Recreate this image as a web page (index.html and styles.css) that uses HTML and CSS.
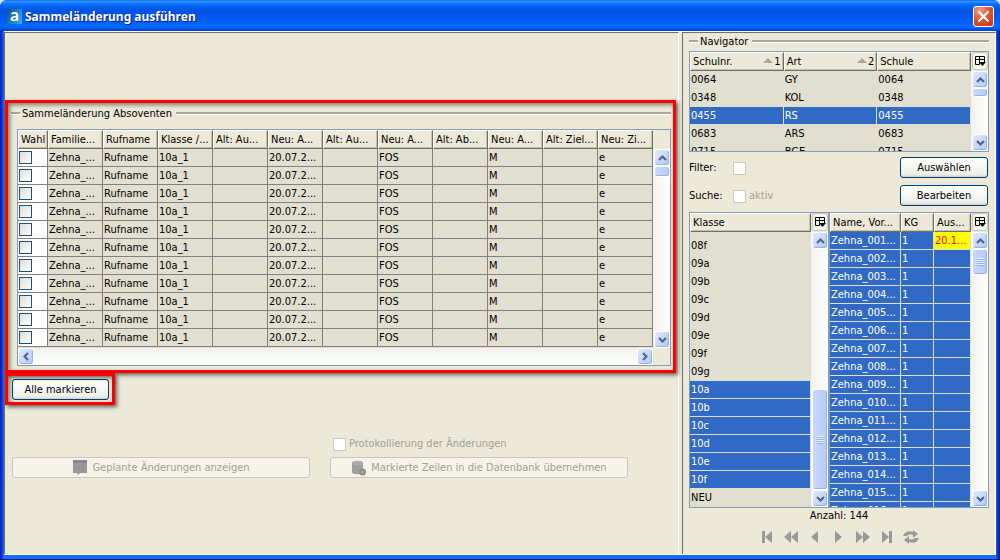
FILE: index.html
```html
<!DOCTYPE html>
<html lang="de">
<head>
<meta charset="utf-8">
<title>Sammeländerung ausführen</title>
<link rel="stylesheet" href="styles.css">
</head>
<body>
<svg class="defs" aria-hidden="true">
  <symbol id="up" viewBox="0 0 9 6"><path d="M1 5 4.500 1.500 8 5" fill="none" stroke="#4d6185" stroke-width="2"/></symbol>
  <symbol id="down" viewBox="0 0 9 6"><path d="M1 1 4.500 4.500 8 1" fill="none" stroke="#4d6185" stroke-width="2"/></symbol>
  <symbol id="left" viewBox="0 0 6 9"><path d="M5 1 1.500 4.500 5 8" fill="none" stroke="#4d6185" stroke-width="2"/></symbol>
  <symbol id="right" viewBox="0 0 6 9"><path d="M1 1 4.500 4.500 1 8" fill="none" stroke="#4d6185" stroke-width="2"/></symbol>
  <symbol id="cols" viewBox="0 0 11 11"><path d="M0.500 0.500h9v3h-9zM0.500 3v5.500h4M4.500 0v8.500M9.500 3v3" fill="none" stroke="#000"/><path d="M4 6h7L7.500 10z"/></symbol>
</svg>
<div class="window">
  <header class="titlebar">
    <span class="logo">a</span>
    <h1>Sammeländerung ausführen</h1>
    <button class="close" aria-label="Schließen"><svg width="13" height="13" viewBox="0 0 13 13"><path d="M1.500 1.500l10 10M11.500 1.500l-10 10" stroke="#fff" stroke-width="2.200"/></svg></button>
  </header>
  <div class="content">
    <main class="main">
      <section class="group marked">
        <h2 class="legend">Sammeländerung Absoventen</h2>
        <div class="frame graduates">
          <div class="view">
            <table class="grid">
              <colgroup><col class="c-check"><col><col><col><col><col><col><col><col><col><col><col></colgroup>
              <thead><tr><th>Wahl</th><th>Familie...</th><th>Rufname</th><th>Klasse /...</th><th>Alt: Au...</th><th>Neu: A...</th><th>Alt: Au...</th><th>Neu: A...</th><th>Alt: Ab...</th><th>Neu: A...</th><th>Alt: Ziel...</th><th>Neu: Zi...</th></tr></thead>
              <tbody>
                <tr><td><input type="checkbox" aria-label="Zeile 1 wählen"></td><td>Zehna_...</td><td>Rufname</td><td>10a_1</td><td></td><td>20.07.2...</td><td></td><td>FOS</td><td></td><td>M</td><td></td><td>e</td></tr>
                <tr><td><input type="checkbox" aria-label="Zeile 2 wählen"></td><td>Zehna_...</td><td>Rufname</td><td>10a_1</td><td></td><td>20.07.2...</td><td></td><td>FOS</td><td></td><td>M</td><td></td><td>e</td></tr>
                <tr><td><input type="checkbox" aria-label="Zeile 3 wählen"></td><td>Zehna_...</td><td>Rufname</td><td>10a_1</td><td></td><td>20.07.2...</td><td></td><td>FOS</td><td></td><td>M</td><td></td><td>e</td></tr>
                <tr><td><input type="checkbox" aria-label="Zeile 4 wählen"></td><td>Zehna_...</td><td>Rufname</td><td>10a_1</td><td></td><td>20.07.2...</td><td></td><td>FOS</td><td></td><td>M</td><td></td><td>e</td></tr>
                <tr><td><input type="checkbox" aria-label="Zeile 5 wählen"></td><td>Zehna_...</td><td>Rufname</td><td>10a_1</td><td></td><td>20.07.2...</td><td></td><td>FOS</td><td></td><td>M</td><td></td><td>e</td></tr>
                <tr><td><input type="checkbox" aria-label="Zeile 6 wählen"></td><td>Zehna_...</td><td>Rufname</td><td>10a_1</td><td></td><td>20.07.2...</td><td></td><td>FOS</td><td></td><td>M</td><td></td><td>e</td></tr>
                <tr><td><input type="checkbox" aria-label="Zeile 7 wählen"></td><td>Zehna_...</td><td>Rufname</td><td>10a_1</td><td></td><td>20.07.2...</td><td></td><td>FOS</td><td></td><td>M</td><td></td><td>e</td></tr>
                <tr><td><input type="checkbox" aria-label="Zeile 8 wählen"></td><td>Zehna_...</td><td>Rufname</td><td>10a_1</td><td></td><td>20.07.2...</td><td></td><td>FOS</td><td></td><td>M</td><td></td><td>e</td></tr>
                <tr><td><input type="checkbox" aria-label="Zeile 9 wählen"></td><td>Zehna_...</td><td>Rufname</td><td>10a_1</td><td></td><td>20.07.2...</td><td></td><td>FOS</td><td></td><td>M</td><td></td><td>e</td></tr>
                <tr><td><input type="checkbox" aria-label="Zeile 10 wählen"></td><td>Zehna_...</td><td>Rufname</td><td>10a_1</td><td></td><td>20.07.2...</td><td></td><td>FOS</td><td></td><td>M</td><td></td><td>e</td></tr>
                <tr><td><input type="checkbox" aria-label="Zeile 11 wählen"></td><td>Zehna_...</td><td>Rufname</td><td>10a_1</td><td></td><td>20.07.2...</td><td></td><td>FOS</td><td></td><td>M</td><td></td><td>e</td></tr>
              </tbody>
            </table>
          </div>
          <div class="vbar"><button aria-label="Nach oben"><svg width="9" height="6"><use href="#up"/></svg></button><span class="thumb t-grad"></span><button class="end" aria-label="Nach unten"><svg width="9" height="6"><use href="#down"/></svg></button></div>
          <div class="hbar"><button aria-label="Nach links"><svg width="6" height="9"><use href="#left"/></svg></button><button aria-label="Nach rechts"><svg width="6" height="9"><use href="#right"/></svg></button></div>
        </div>
      </section>
      <div class="mark-all marked"><button class="btn">Alle markieren</button></div>
      <div class="actions">
        <label class="log disabled"><input type="checkbox" disabled>Protokollierung der Änderungen</label>
        <button class="btn show" disabled><svg width="16" height="15" viewBox="0 0 16 15"><path d="M1 0h14v13H8l-2 2-1-2H1z" fill="#99999a"/><path d="M1 1.500h14" stroke="#828284" stroke-width="2"/><path d="M4 10l3-4v4M10 5h2l-2 3 2 2" fill="none" stroke="#8c8c8c"/></svg>Geplante Änderungen anzeigen</button>
        <button class="btn apply" disabled><svg width="16" height="16" viewBox="0 0 16 16"><path d="M1 3c0-3 11-3 11 0v9c0 3-11 3-11 0z" fill="#a0a0a0"/><ellipse cx="6.500" cy="3" rx="5" ry="2" fill="#adadad"/><circle cx="11.500" cy="12" r="3.500" fill="#8c8c8c"/><path d="M9.500 12h4M11.500 10v4" stroke="#aaa"/></svg>Markierte Zeilen in die Datenbank übernehmen</button>
      </div>
    </main>
    <aside class="side">
      <h2 class="legend">Navigator</h2>
      <div class="frame schools">
        <div class="view">
          <table class="grid plain">
            <thead><tr><th>Schulnr.<span class="sort">1</span></th><th>Art<span class="sort">2</span></th><th>Schule</th></tr></thead>
            <tbody>
              <tr><td>0064</td><td>GY</td><td>0064</td></tr>
              <tr><td>0348</td><td>KOL</td><td>0348</td></tr>
              <tr class="sel"><td>0455</td><td>RS</td><td>0455</td></tr>
              <tr><td>0683</td><td>ARS</td><td>0683</td></tr>
              <tr><td>0715</td><td>BGE</td><td>0715</td></tr>
            </tbody>
          </table>
        </div>
        <button class="colbtn" aria-label="Spalten"><svg width="11" height="11"><use href="#cols"/></svg></button>
        <div class="vbar"><button aria-label="Nach oben"><svg width="9" height="6"><use href="#up"/></svg></button><span class="thumb t-school"></span><button class="end" aria-label="Nach unten"><svg width="9" height="6"><use href="#down"/></svg></button></div>
      </div>
      <div class="tools">
        <label for="filter">Filter:</label><span><input type="checkbox" id="filter" disabled></span><button class="btn">Auswählen</button>
        <span>Suche:</span><label class="disabled"><input type="checkbox" disabled>aktiv</label><button class="btn">Bearbeiten</button>
      </div>
      <div class="lists">
        <div class="frame classes">
          <div class="view">
            <table class="grid plain">
              <thead><tr><th>Klasse</th></tr></thead>
              <tbody>
                <tr class="cut"><td></td></tr>
                <tr><td>08f</td></tr><tr><td>09a</td></tr><tr><td>09b</td></tr><tr><td>09c</td></tr><tr><td>09d</td></tr><tr><td>09e</td></tr><tr><td>09f</td></tr><tr><td>09g</td></tr>
                <tr class="sel"><td>10a</td></tr><tr class="sel"><td>10b</td></tr><tr class="sel"><td>10c</td></tr><tr class="sel"><td>10d</td></tr><tr class="sel"><td>10e</td></tr><tr class="sel"><td>10f</td></tr>
                <tr><td>NEU</td></tr>
              </tbody>
            </table>
          </div>
          <button class="colbtn" aria-label="Spalten"><svg width="11" height="11"><use href="#cols"/></svg></button>
          <div class="vbar"><button aria-label="Nach oben"><svg width="9" height="6"><use href="#up"/></svg></button><span class="thumb t-class grip"></span><button aria-label="Nach unten"><svg width="9" height="6"><use href="#down"/></svg></button></div>
        </div>
        <div class="frame pupils">
          <div class="view">
            <table class="grid plain">
              <colgroup><col><col class="c-kg"><col class="c-out"></colgroup>
              <thead><tr><th>Name, Vor...</th><th>KG</th><th>Aus...</th></tr></thead>
              <tbody>
                <tr class="sel"><td>Zehna_001...</td><td>1</td><td class="alert">20.1...</td></tr>
                <tr class="sel"><td>Zehna_002...</td><td>1</td><td></td></tr>
                <tr class="sel"><td>Zehna_003...</td><td>1</td><td></td></tr>
                <tr class="sel"><td>Zehna_004...</td><td>1</td><td></td></tr>
                <tr class="sel"><td>Zehna_005...</td><td>1</td><td></td></tr>
                <tr class="sel"><td>Zehna_006...</td><td>1</td><td></td></tr>
                <tr class="sel"><td>Zehna_007...</td><td>1</td><td></td></tr>
                <tr class="sel"><td>Zehna_008...</td><td>1</td><td></td></tr>
                <tr class="sel"><td>Zehna_009...</td><td>1</td><td></td></tr>
                <tr class="sel"><td>Zehna_010...</td><td>1</td><td></td></tr>
                <tr class="sel"><td>Zehna_011...</td><td>1</td><td></td></tr>
                <tr class="sel"><td>Zehna_012...</td><td>1</td><td></td></tr>
                <tr class="sel"><td>Zehna_013...</td><td>1</td><td></td></tr>
                <tr class="sel"><td>Zehna_014...</td><td>1</td><td></td></tr>
                <tr class="sel"><td>Zehna_015...</td><td>1</td><td></td></tr>
                <tr class="sel"><td>Zehna_016...</td><td>1</td><td></td></tr>
              </tbody>
            </table>
          </div>
          <button class="colbtn" aria-label="Spalten"><svg width="11" height="11"><use href="#cols"/></svg></button>
          <div class="vbar"><button aria-label="Nach oben"><svg width="9" height="6"><use href="#up"/></svg></button><span class="thumb t-pupil grip"></span><button class="end" aria-label="Nach unten"><svg width="9" height="6"><use href="#down"/></svg></button></div>
        </div>
      </div>
      <p class="count">Anzahl: 144</p>
      <nav class="pager">
        <button aria-label="Erster"><svg viewBox="0 0 16 14"><path d="M3 1h3v12H3zM13 1v12L6 7z"/></svg></button>
        <button aria-label="Schnell zurück"><svg viewBox="0 0 16 14"><path d="M8 1v12L1 7zM15 1v12L8 7z"/></svg></button>
        <button aria-label="Zurück"><svg viewBox="0 0 16 14"><path d="M11 1v12L4 7z"/></svg></button>
        <button aria-label="Weiter"><svg viewBox="0 0 16 14"><path d="M4 1v12l7-6z"/></svg></button>
        <button aria-label="Schnell vor"><svg viewBox="0 0 16 14"><path d="M1 1v12l7-6zM8 1v12l7-6z"/></svg></button>
        <button aria-label="Letzter"><svg viewBox="0 0 16 14"><path d="M3 1v12l7-6zM10 1h3v12h-3z"/></svg></button>
        <button aria-label="Aktualisieren"><svg viewBox="0 0 16 14"><path d="M0 6c1-4 6-6 10-4V0l5 4-5 4V5C7 4 5 5 4 6zM16 8c-1 4-6 6-10 4v2l-5-4 5-4v3c3 1 5 0 6-1z"/></svg></button>
      </nav>
    </aside>
  </div>
</div>
</body>
</html>
```
FILE: styles.css
```css
* { box-sizing: border-box; }
body { margin: 0; background: #d8e4f8; font: 11px/17px "DejaVu Sans Condensed", "DejaVu Sans", sans-serif; color: #000; }
button, input { font: inherit; margin: 0; padding: 0; }
h1, h2, p { margin: 0; }
.defs { display: none; }

.window { min-height: 100vh; display: flex; flex-direction: column; border-radius: 7px 7px 0 0; overflow: hidden;
  background: linear-gradient(90deg, #0010b8 0, #0a3cdc 2px, #166ef0 4px, #166ef0 calc(100% - 4px), #0042dc calc(100% - 3px), #001590 100%);
  padding: 0 4px 4px; border-bottom: 1px solid #00138c; }
.titlebar { display: flex; align-items: center; height: 31px; margin: 0 -4px; padding: 2px 6px 0 7px; gap: 3px;
  background: linear-gradient(#0058ee 0, #3593ff 1px, #288eff 2px, #127dff 3px, #0369fc 5px, #0262ee 7px, #0054e3 10px, #0055eb 15px, #005bf5 20px, #026afe 26px, #0061fc 28px, #0144d0 30px); }
.titlebar h1 { flex: 1; font: bold 12px/18px "Noto Sans", sans-serif; color: #fff; text-shadow: 1px 1px #0a1883; }
.logo { width: 15px; height: 15px; background: linear-gradient(120deg, #0b4f8c, #31b4e8); color: #fff; font: bold 17px/12px Lato, sans-serif; text-align: center; }
.close { width: 21px; height: 21px; border: 1px solid #fff; border-radius: 3px; display: grid; place-items: center; background: radial-gradient(circle at 30% 20%, #f0a080, #e05030 50%, #c83410); }

.content { flex: 1; display: flex; gap: 3px; background: #ece9d8; border-top: 1px solid #fff; border-bottom: 1px solid #fff; }
.main { flex: 1; min-width: 0; border: solid #716f64; border-width: 1px 0 0 1px; border-right: 1px solid #fff; padding: 67px 2px 0 0; }
.side { width: 314px; border: solid #716f64; border-width: 1px 0 0 1px; border-right: 1px solid #fff; padding: 0 6px; }

.legend { display: flex; align-items: center; gap: 2px; font-size: 11px; line-height: 17px; font-weight: normal; }
.legend::before, .legend::after { content: ""; height: 2px; background: #aca899; border-bottom: 1px solid #fff; }
.legend::before { width: 9px; }
.legend::after { flex: 1; margin-left: 2px; }

.marked { position: relative; }
.marked::after { content: ""; position: absolute; inset: 0; border: 3px solid #f00; box-shadow: 2px 2px 4px #0009, inset 2px 2px 4px #0007; pointer-events: none; }
.group { height: 273px; padding: 5px 5px 0 6px; }
.group .frame { margin: 7px 0 0 6px; }

.frame { display: grid; grid-template-columns: 1fr 17px; grid-template-rows: 19px 1fr; border: 1px solid #7f9db9; }
.view { grid-area: 1 / 1 / 3 / 2; overflow: hidden; min-width: 0; background: #e0dfd0; }
.graduates { grid-template-rows: 19px 199px 17px; }
.schools { height: 101px; }
.grid { width: 100%; table-layout: fixed; border-spacing: 0; white-space: nowrap; }
.grid th { height: 19px; padding: 0 0 0 2px; font-weight: normal; text-align: left; line-height: 15px; overflow: hidden;
  background: #ece9d8; border: 1px solid; border-color: #fff #716f64 #716f64 #fff; box-shadow: inset -1px -1px #c5c2b2; }
.grid td { height: 18px; padding: 0 0 0 1px; line-height: 17px; overflow: hidden; border: solid #808080; border-width: 0 1px 1px 0; }
.c-check { width: 30px; }
.graduates td:first-child { background: #fff; }
.plain td { border-color: #e0dfd0; }
.plain .sel td { background: #316ac5; color: #fff; }
.plain .sel .alert { background: #ff0; color: #f00; }
.plain .cut td { height: 5px; border: 0; line-height: 5px; }
.c-kg { width: 33px; }
.c-out { width: 37px; }
.sort { float: right; padding-right: 2px; }
.sort::before { content: ""; display: inline-block; border: solid transparent; border-width: 0 5px 5px; border-bottom-color: #aca899; margin: 0 1px 2px 0; }

input[type="checkbox"] { appearance: none; width: 13px; height: 13px; border: 1px solid #1c5180; background: linear-gradient(135deg, #dcdcd7, #fff); vertical-align: middle; }
input[type="checkbox"]:disabled { border-color: #cac8bb; background: #fff; }
td input[type="checkbox"] { display: block; }

.vbar { grid-column: 2; grid-row: 2; display: flex; flex-direction: column; padding-left: 1px; background: linear-gradient(90deg, #f3f1ec, #fefefb); }
.hbar { grid-column: 1; display: flex; justify-content: space-between; background: linear-gradient(#f3f1ec, #fefefb); }
.vbar button, .hbar button { width: 16px; height: 17px; flex: none; display: grid; place-items: center; border: 1px solid #fff; border-radius: 3px; background: linear-gradient(135deg, #e1eafe, #aec8f7); box-shadow: inset -1px -1px #98b4e4; }
.vbar .end { margin-top: auto; }
.thumb { width: 16px; border: 1px solid #fff; border-radius: 3px; background: linear-gradient(90deg, #c9d8fc, #b9cbf6); box-shadow: inset -1px -1px #98b4e4; display: grid; place-items: center; }
.grip::before { content: ""; width: 7px; height: 8px; background: repeating-linear-gradient(#eef4fe 0 1px, #8cb0f8 1px 2px); }
.t-grad { height: 11px; }
.t-school { height: 9px; }
.t-pupil { height: 26px; }
.t-class { height: 101px; margin-top: auto; }
.colbtn { width: 16px; height: 18px; margin-left: 1px; display: grid; place-items: center; background: #f5f4ea; border: 1px solid #c9c7ba; border-radius: 3px; }

.btn { height: 21px; border: 1px solid #003c74; border-radius: 3px; background: linear-gradient(#fff, #f0f0ea 85%, #d6d0c5); color: #000; display: flex; align-items: center; justify-content: center; gap: 4px; }
.btn:disabled { border-color: #c9c7ba; background: #f5f4ea; color: #a1a192; }
.disabled { color: #a1a192; }
.disabled input { margin-right: 3px; }
.mark-all { width: 110px; height: 32px; padding: 6px 6px 0 7px; }
.mark-all .btn { width: 97px; }
.actions { display: grid; grid-template-columns: 298px 298px; column-gap: 20px; row-gap: 5px; padding: 30px 0 0 7px; }
.log { grid-column: 2; padding-left: 3px; }

.schools { margin-top: 1px; }
.tools { display: grid; grid-template-columns: 44px 1fr 88px; row-gap: 7px; align-items: center; padding: 5px 1px 6px 0; }
.lists { display: grid; grid-template-columns: 139px 1fr; height: 296px; }
.pupils { border-left-width: 2px; }
.classes { border-right: 0; }
.lists .view { height: 294px; }
.count { text-align: center; line-height: 16px; }
.pager { display: flex; justify-content: center; gap: 8px; padding-top: 6px; }
.pager button { border: 0; background: none; width: 16px; height: 14px; }
.pager svg { display: block; width: 16px; height: 14px; fill: #99999a; }
```
